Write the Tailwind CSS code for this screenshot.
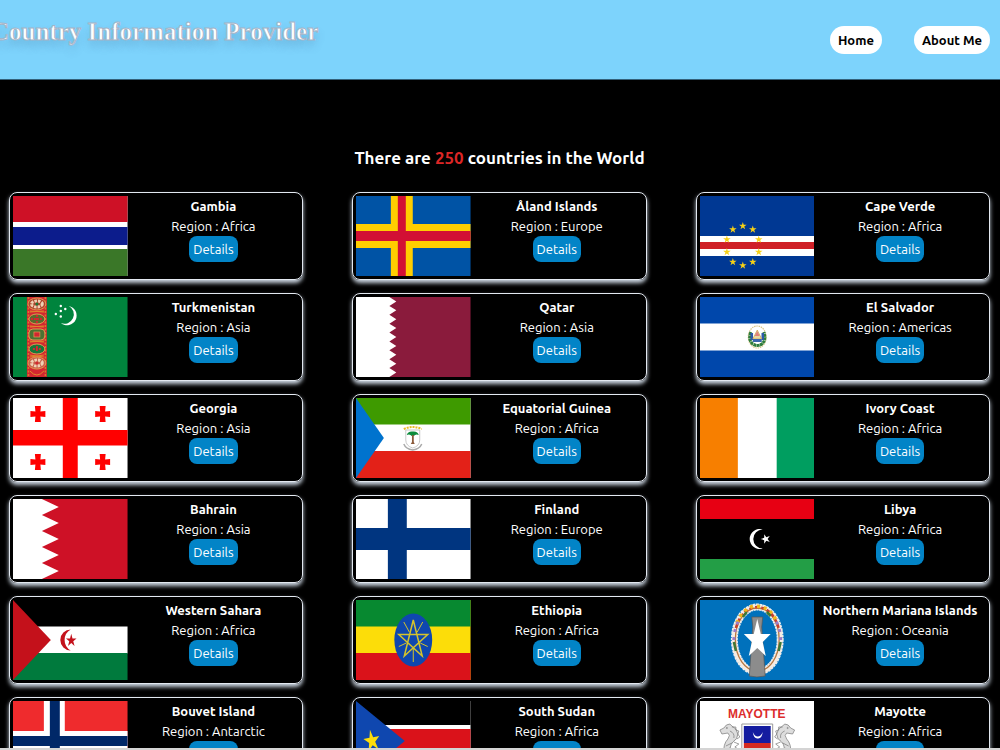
<!DOCTYPE html>
<html lang="en">

<head>
    <meta charset="UTF-8">
    <title>Country Information Provider</title>
    <meta name="viewport" content="width=device-width, initial-scale=1.0">
    <script src="https://cdn.jsdelivr.net/npm/@tailwindcss/browser@4"></script>
</head>

<body class="h-screen overflow-hidden bg-black text-white font-['Ubuntu','Noto_Sans',sans-serif] text-[13px] leading-5">
    <!-- Shared shapes -->
    <svg class="hidden">
        <defs>
            <polygon id="star" points="0,-10 2.2,-3.1 9.5,-3.1 3.6,1.2 5.9,8.1 0,3.8 -5.9,8.1 -3.6,1.2 -9.5,-3.1 -2.2,-3.1" />
            <path id="cross" d="M-3,-8 H3 L2.5,-2.5 L7.5,-3 V3 L2.5,2.5 L3,8 H-3 L-2.5,2.5 L-7.5,3 V-3 L-2.5,-2.5 Z" />
            <g id="seahorse" stroke="#777" stroke-width=".7" fill="#ddd">
                <path d="M-9,3 L-5,1 Q-3,-3 1,-3 L3,-1 Q8,1 9,7 Q9,12 4,15 Q0,19 2,27 L-5,27 Q-6,17 -1,12 Q2,8 -1,6 L-7,7 Z" />
                <path d="M3,0 L7,0 L7,3 L10,4 L9,7 L11,10 L8,12 M1,4 Q6,6 5,11 M-3,19 L3,16 M-4,23 L1,21 M5,15 L10,17 L6,20 L11,23 L5,27" fill="none" />
                <circle cx="-2" cy="1" r=".6" />
            </g>
        </defs>
    </svg>

    <!-- Header -->
    <header class="flex justify-between h-20 bg-[#7dd3fc] border-b border-[#33607a]">
        <h1 class="-ml-[9px] pt-4 font-['Liberation_Serif',serif] font-bold text-[25px] leading-8 text-white whitespace-nowrap [-webkit-text-stroke:1px_#a3b4c8] [text-shadow:0_6px_8px_rgba(60,100,140,0.3)]">Country Information Provider</h1>
        <nav class="flex items-center gap-8 pr-[10px] font-bold text-black">
            <a href="#" class="bg-white rounded-full px-2 py-1">Home</a>
            <a href="#" class="bg-white rounded-full px-2 py-1">About Me</a>
        </nav>
    </header>

    <main class="pl-[9px] pr-[10px] pt-16">
        <h2 class="text-center font-bold text-[17px] leading-7 mb-5">There are <span class="text-[#dc2626]">250</span> countries in the World</h2>

        <!-- Countries -->
        <div class="grid grid-cols-3 gap-x-[49px] gap-y-[13px]">
            <div class="flex p-[3px] border border-slate-200 rounded-lg shadow-[0_3px_4px_#cbd5e1]">
                <svg class="w-2/5 h-20" viewBox="0 0 115 80" preserveAspectRatio="none">
                    <rect width="115" height="80" fill="#fff" />
                    <rect width="115" height="26" fill="#ce1126" />
                    <rect y="31" width="115" height="18" fill="#0c1c8c" />
                    <rect y="53" width="115" height="27" fill="#3a7728" />
                </svg>
                <div class="w-3/5 text-center whitespace-nowrap">
                    <h3 class="font-bold">Gambia</h3>
                    <p>Region : Africa</p>
                    <button class="bg-[#0284c7] rounded-lg px-1 py-[3px] block mx-auto">Details</button>
                </div>
            </div>

            <div class="flex p-[3px] border border-slate-200 rounded-lg shadow-[0_3px_4px_#cbd5e1]">
                <svg class="w-2/5 h-20" viewBox="0 0 115 80" preserveAspectRatio="none">
                    <rect width="115" height="80" fill="#0053a5" />
                    <path d="M35,0H57V28H115V52H57V80H35V52H0V28H35Z" fill="#ffce00" />
                    <path d="M42,0H50V35H115V45H50V80H42V45H0V35H42Z" fill="#d21034" />
                </svg>
                <div class="w-3/5 text-center whitespace-nowrap">
                    <h3 class="font-bold">Åland Islands</h3>
                    <p>Region : Europe</p>
                    <button class="bg-[#0284c7] rounded-lg px-1 py-[3px] block mx-auto">Details</button>
                </div>
            </div>

            <div class="flex p-[3px] border border-slate-200 rounded-lg shadow-[0_3px_4px_#cbd5e1]">
                <svg class="w-2/5 h-20" viewBox="0 0 115 80" preserveAspectRatio="none">
                    <rect width="115" height="80" fill="#003893" />
                    <rect y="40" width="115" height="20" fill="#fff" />
                    <rect y="46" width="115" height="7" fill="#cf2027" />
                    <g fill="#f7d116">
                        <use href="#star" transform="translate(43 30) scale(.4)" />
                        <use href="#star" transform="translate(53 33.5) scale(.4)" />
                        <use href="#star" transform="translate(59 43.5) scale(.4)" />
                        <use href="#star" transform="translate(59 56) scale(.4)" />
                        <use href="#star" transform="translate(53 66) scale(.4)" />
                        <use href="#star" transform="translate(43 69.5) scale(.4)" />
                        <use href="#star" transform="translate(33 66) scale(.4)" />
                        <use href="#star" transform="translate(27 56) scale(.4)" />
                        <use href="#star" transform="translate(27 43.5) scale(.4)" />
                        <use href="#star" transform="translate(33 33.5) scale(.4)" />
                    </g>
                </svg>
                <div class="w-3/5 text-center whitespace-nowrap">
                    <h3 class="font-bold">Cape Verde</h3>
                    <p>Region : Africa</p>
                    <button class="bg-[#0284c7] rounded-lg px-1 py-[3px] block mx-auto">Details</button>
                </div>
            </div>

            <div class="flex p-[3px] border border-slate-200 rounded-lg shadow-[0_3px_4px_#cbd5e1]">
                <svg class="w-2/5 h-20" viewBox="0 0 115 80" preserveAspectRatio="none">
                    <rect width="115" height="80" fill="#00843d" />
                    <rect x="14" width="20" height="80" fill="#d22630" />
                    <path d="M15.5,0V80M32.5,0V80" stroke="#d9782c" stroke-width="1.5" stroke-dasharray="2 1.5" />
                    <g fill="none" stroke="#dd8a2c" stroke-width="1">
                        <path d="M17,14L31,15M17,15L31,14M17,29L31,30M17,30L31,29M17,44L31,45M17,45L31,44M17,58L31,60M17,60L31,58M17,74Q24,82 31,74" />
                    </g>
                    <g stroke="#e39a52" stroke-width="1">
                        <ellipse cx="24" cy="7" rx="9" ry="6" fill="#b0452c" />
                        <ellipse cx="24" cy="22" rx="8" ry="5" fill="#5a6a2c" />
                        <rect x="16" y="32" width="16" height="11" rx="4" fill="#4c7232" />
                        <ellipse cx="24" cy="52" rx="8" ry="5" fill="#18783a" />
                        <ellipse cx="24" cy="66" rx="9" ry="6" fill="#c9604a" />
                    </g>
                    <g fill="none" stroke="#efd0b4" stroke-width="3" stroke-dasharray="2.5 1">
                        <ellipse cx="24" cy="7" rx="5.5" ry="3" />
                        <ellipse cx="24" cy="66" rx="5.5" ry="3" />
                    </g>
                    <path d="M18,22H30M24,18V26M20,52H28M24,49V55" stroke="#d22630" stroke-width="2" stroke-dasharray="2 1" />
                    <rect x="21" y="35" width="6" height="5" fill="#d22630" stroke="#e39a52" stroke-width=".7" />
                    <circle cx="24" cy="7" r="1.5" fill="#18783a" />
                    <circle cx="24" cy="66" r="1.5" fill="#d22630" />
                    <path d="M56,9A9.7,9.7 0 1 1 48,26A9.4,9.4 0 0 0 56,9Z" fill="#fff" />
                    <g fill="#fff">
                        <circle cx="48" cy="9" r="1.2" />
                        <circle cx="52.5" cy="12" r="1.2" />
                        <circle cx="48" cy="14" r="1.2" />
                        <circle cx="43" cy="17" r="1.2" />
                        <circle cx="48" cy="19.5" r="1.2" />
                    </g>
                </svg>
                <div class="w-3/5 text-center whitespace-nowrap">
                    <h3 class="font-bold">Turkmenistan</h3>
                    <p>Region : Asia</p>
                    <button class="bg-[#0284c7] rounded-lg px-1 py-[3px] block mx-auto">Details</button>
                </div>
            </div>

            <div class="flex p-[3px] border border-slate-200 rounded-lg shadow-[0_3px_4px_#cbd5e1]">
                <svg class="w-2/5 h-20" viewBox="0 0 115 80" preserveAspectRatio="none">
                    <rect width="115" height="80" fill="#8a1b3c" />
                    <path d="M0,0H33.5L40.5,4.4L33.5,8.9L40.5,13.3L33.5,17.8L40.5,22.2L33.5,26.7L40.5,31.1L33.5,35.6L40.5,40L33.5,44.4L40.5,48.9L33.5,53.3L40.5,57.8L33.5,62.2L40.5,66.7L33.5,71.1L40.5,75.6L33.5,80H0Z" fill="#fff" />
                </svg>
                <div class="w-3/5 text-center whitespace-nowrap">
                    <h3 class="font-bold">Qatar</h3>
                    <p>Region : Asia</p>
                    <button class="bg-[#0284c7] rounded-lg px-1 py-[3px] block mx-auto">Details</button>
                </div>
            </div>

            <div class="flex p-[3px] border border-slate-200 rounded-lg shadow-[0_3px_4px_#cbd5e1]">
                <svg class="w-2/5 h-20" viewBox="0 0 115 80" preserveAspectRatio="none">
                    <rect width="115" height="80" fill="#0047ab" />
                    <rect y="26.5" width="115" height="27" fill="#fff" />
                    <ellipse cx="57.5" cy="40" rx="9" ry="11" fill="none" stroke="#d9c689" stroke-width="1.2" stroke-dasharray="1.5 .8" />
                    <path d="M51,35Q48,43 53,47Q58,50 62,47Q67,43 64,35" fill="none" stroke="#2f7d3c" stroke-width="3" stroke-dasharray="3 .4" />
                    <path d="M52,36V43M63,36V43" stroke="#2d5aa8" stroke-width="2.5" />
                    <path d="M57.5,33L62,42H53Z" fill="#e8d8a0" stroke="#c9a14a" stroke-width=".7" />
                    <path d="M55,39L57.5,34L60,39Z" fill="#e0807c" />
                    <path d="M53,42H62V45H53Z" fill="#3a66b0" />
                </svg>
                <div class="w-3/5 text-center whitespace-nowrap">
                    <h3 class="font-bold">El Salvador</h3>
                    <p>Region : Americas</p>
                    <button class="bg-[#0284c7] rounded-lg px-1 py-[3px] block mx-auto">Details</button>
                </div>
            </div>

            <div class="flex p-[3px] border border-slate-200 rounded-lg shadow-[0_3px_4px_#cbd5e1]">
                <svg class="w-2/5 h-20" viewBox="0 0 115 80" preserveAspectRatio="none">
                    <rect width="115" height="80" fill="#fff" />
                    <g fill="#f00">
                        <path d="M50,0H65V32H115V47.5H65V80H50V47.5H0V32H50Z" />
                        <use href="#cross" x="25" y="16" />
                        <use href="#cross" x="90" y="16" />
                        <use href="#cross" x="25" y="64" />
                        <use href="#cross" x="90" y="64" />
                    </g>
                </svg>
                <div class="w-3/5 text-center whitespace-nowrap">
                    <h3 class="font-bold">Georgia</h3>
                    <p>Region : Asia</p>
                    <button class="bg-[#0284c7] rounded-lg px-1 py-[3px] block mx-auto">Details</button>
                </div>
            </div>

            <div class="flex p-[3px] border border-slate-200 rounded-lg shadow-[0_3px_4px_#cbd5e1]">
                <svg class="w-2/5 h-20" viewBox="0 0 115 80" preserveAspectRatio="none">
                    <rect width="115" height="80" fill="#fff" />
                    <rect width="115" height="26.5" fill="#3e9a00" />
                    <rect y="53" width="115" height="27" fill="#e32118" />
                    <path d="M0,0L28,40L0,80Z" fill="#0073ce" />
                    <path d="M50,32H64V42Q64,48 57,50Q50,48 50,42Z" fill="#fff" stroke="#bbb" stroke-width=".8" />
                    <path d="M48,31Q57,27 66,31" fill="none" stroke="#e8b923" stroke-width="2" stroke-dasharray="2 1" />
                    <path d="M51,37Q52,33 57,33.5Q62,33 63,37Q60,35.5 58,38H56Q54,35.5 51,37Z" fill="#0c8c3c" />
                    <path d="M56.2,37H58V44L59,46H55L56.2,44Z" fill="#8a5a3a" />
                    <path d="M48,46Q50,51 57,52Q64,51 66,46" fill="none" stroke="#aaa" stroke-width="1.5" />
                </svg>
                <div class="w-3/5 text-center whitespace-nowrap">
                    <h3 class="font-bold">Equatorial Guinea</h3>
                    <p>Region : Africa</p>
                    <button class="bg-[#0284c7] rounded-lg px-1 py-[3px] block mx-auto">Details</button>
                </div>
            </div>

            <div class="flex p-[3px] border border-slate-200 rounded-lg shadow-[0_3px_4px_#cbd5e1]">
                <svg class="w-2/5 h-20" viewBox="0 0 115 80" preserveAspectRatio="none">
                    <rect width="115" height="80" fill="#fff" />
                    <rect width="38" height="80" fill="#f77f00" />
                    <rect x="77" width="38" height="80" fill="#009e60" />
                </svg>
                <div class="w-3/5 text-center whitespace-nowrap">
                    <h3 class="font-bold">Ivory Coast</h3>
                    <p>Region : Africa</p>
                    <button class="bg-[#0284c7] rounded-lg px-1 py-[3px] block mx-auto">Details</button>
                </div>
            </div>

            <div class="flex p-[3px] border border-slate-200 rounded-lg shadow-[0_3px_4px_#cbd5e1]">
                <svg class="w-2/5 h-20" viewBox="0 0 115 80" preserveAspectRatio="none">
                    <rect width="115" height="80" fill="#ce1126" />
                    <path d="M0,0H29L46,8L29,16L46,24L29,32L46,40L29,48L46,56L29,64L46,72L29,80H0Z" fill="#fff" />
                </svg>
                <div class="w-3/5 text-center whitespace-nowrap">
                    <h3 class="font-bold">Bahrain</h3>
                    <p>Region : Asia</p>
                    <button class="bg-[#0284c7] rounded-lg px-1 py-[3px] block mx-auto">Details</button>
                </div>
            </div>

            <div class="flex p-[3px] border border-slate-200 rounded-lg shadow-[0_3px_4px_#cbd5e1]">
                <svg class="w-2/5 h-20" viewBox="0 0 115 80" preserveAspectRatio="none">
                    <rect width="115" height="80" fill="#fff" />
                    <path d="M32,0H51V29H115V51H51V80H32V51H0V29H32Z" fill="#003580" />
                </svg>
                <div class="w-3/5 text-center whitespace-nowrap">
                    <h3 class="font-bold">Finland</h3>
                    <p>Region : Europe</p>
                    <button class="bg-[#0284c7] rounded-lg px-1 py-[3px] block mx-auto">Details</button>
                </div>
            </div>

            <div class="flex p-[3px] border border-slate-200 rounded-lg shadow-[0_3px_4px_#cbd5e1]">
                <svg class="w-2/5 h-20" viewBox="0 0 115 80" preserveAspectRatio="none">
                    <rect width="115" height="80" fill="#000" />
                    <rect width="115" height="20" fill="#e70013" />
                    <rect y="60" width="115" height="20" fill="#239e46" />
                    <path d="M63,30.5A10,10 0 1 0 63,49.5A9.5,9.5 0 0 1 63,30.5Z" fill="#fff" />
                    <use href="#star" transform="translate(66 40) rotate(-18) scale(.5)" fill="#fff" />
                </svg>
                <div class="w-3/5 text-center whitespace-nowrap">
                    <h3 class="font-bold">Libya</h3>
                    <p>Region : Africa</p>
                    <button class="bg-[#0284c7] rounded-lg px-1 py-[3px] block mx-auto">Details</button>
                </div>
            </div>

            <div class="flex p-[3px] border border-slate-200 rounded-lg shadow-[0_3px_4px_#cbd5e1]">
                <svg class="w-2/5 h-20" viewBox="0 0 115 80" preserveAspectRatio="none">
                    <rect width="115" height="80" fill="#000" />
                    <rect y="26.5" width="115" height="27" fill="#fff" />
                    <rect y="53" width="115" height="27" fill="#007a3d" />
                    <path d="M0,0L38,40L0,80Z" fill="#c4111b" />
                    <path d="M58,29.5A10.5,10.5 0 0 0 58,50.5A12,12 0 0 1 58,29.5Z" fill="#c4111b" />
                    <use href="#star" transform="translate(58.5 40.5) scale(.56 .68)" fill="#c4111b" />
                </svg>
                <div class="w-3/5 text-center whitespace-nowrap">
                    <h3 class="font-bold">Western Sahara</h3>
                    <p>Region : Africa</p>
                    <button class="bg-[#0284c7] rounded-lg px-1 py-[3px] block mx-auto">Details</button>
                </div>
            </div>

            <div class="flex p-[3px] border border-slate-200 rounded-lg shadow-[0_3px_4px_#cbd5e1]">
                <svg class="w-2/5 h-20" viewBox="0 0 115 80" preserveAspectRatio="none">
                    <rect width="115" height="80" fill="#fcdd09" />
                    <rect width="115" height="26.5" fill="#078930" />
                    <rect y="53" width="115" height="27" fill="#da121a" />
                    <ellipse cx="57.5" cy="40" rx="19" ry="26.5" fill="#0f47af" />
                    <g fill="none" stroke="#d4c32c" stroke-width="1.5">
                        <path d="M57.5,20L66.5,56L43,34.5H72L48.5,56Z" />
                        <path d="M57.5,49V62M61.5,32L67,22M53.5,32L48,22M64.5,43L72,46.5M50.5,43L43,46.5" stroke-width="1" />
                    </g>
                </svg>
                <div class="w-3/5 text-center whitespace-nowrap">
                    <h3 class="font-bold">Ethiopia</h3>
                    <p>Region : Africa</p>
                    <button class="bg-[#0284c7] rounded-lg px-1 py-[3px] block mx-auto">Details</button>
                </div>
            </div>

            <div class="flex p-[3px] border border-slate-200 rounded-lg shadow-[0_3px_4px_#cbd5e1]">
                <svg class="w-2/5 h-20" viewBox="0 0 115 80" preserveAspectRatio="none">
                    <rect width="115" height="80" fill="#0071bc" />
                    <g fill="none">
                        <ellipse cx="57.5" cy="39.5" rx="23" ry="32.5" stroke="#eee" stroke-width="7" stroke-dasharray="2.5 .6" />
                        <ellipse cx="57.5" cy="39.5" rx="23" ry="32.5" stroke="#f4ece4" stroke-width="5" />
                        <ellipse cx="57.5" cy="39.5" rx="22" ry="31.5" stroke="#b87840" stroke-width="1.3" />
                        <path d="M36,28Q42,8 57.5,7Q73,8 79,28" stroke="#c8402c" stroke-width="2.5" stroke-dasharray="4 2" />
                        <path d="M37,23Q43,9 54,6Q71,6 77,22" stroke="#f0b81c" stroke-width="3.5" stroke-dasharray="3 4" />
                        <path d="M34,40Q34,30 39,20M81,40Q81,30 76,20" stroke="#9a7cc8" stroke-width="3" stroke-dasharray="3 5" />
                        <path d="M36,51L34,42M79,51L81,42M43,17L47,12M71,16L67,12" stroke="#3c7838" stroke-width="2.5" />
                    </g>
                    <path d="M52,17H63L62,27L65.5,76Q57,78 49.5,76L53,27Z" fill="#8c8c8c" stroke="#555" stroke-width=".7" />
                    <path d="M57.5,19L61,34H71L63,42L66,56L57.5,48L49,56L52,42L44,34H54Z" fill="#fff" />
                </svg>
                <div class="w-3/5 text-center whitespace-nowrap">
                    <h3 class="font-bold">Northern Mariana Islands</h3>
                    <p>Region : Oceania</p>
                    <button class="bg-[#0284c7] rounded-lg px-1 py-[3px] block mx-auto">Details</button>
                </div>
            </div>

            <div class="flex p-[3px] border border-slate-200 rounded-lg shadow-[0_3px_4px_#cbd5e1]">
                <svg class="w-2/5 h-20" viewBox="0 0 115 80" preserveAspectRatio="none">
                    <rect width="115" height="80" fill="#ef2b2d" />
                    <path d="M31,0H52V30H115V50H52V80H31V50H0V30H31Z" fill="#fff" />
                    <path d="M37,0H47V35H115V45H47V80H37V45H0V35H37Z" fill="#002868" />
                </svg>
                <div class="w-3/5 text-center whitespace-nowrap">
                    <h3 class="font-bold">Bouvet Island</h3>
                    <p>Region : Antarctic</p>
                    <button class="bg-[#0284c7] rounded-lg px-1 py-[3px] block mx-auto">Details</button>
                </div>
            </div>

            <div class="flex p-[3px] border border-slate-200 rounded-lg shadow-[0_3px_4px_#cbd5e1]">
                <svg class="w-2/5 h-20" viewBox="0 0 115 80" preserveAspectRatio="none">
                    <rect width="115" height="80" fill="#fff" />
                    <rect width="115" height="24" fill="#000" />
                    <rect y="28" width="115" height="24" fill="#da121a" />
                    <rect y="56" width="115" height="24" fill="#078930" />
                    <path d="M0,0L49,40L0,80Z" fill="#0f47af" />
                    <use href="#star" transform="translate(16 40) rotate(-10) scale(.85 1.15)" fill="#fcdd09" />
                </svg>
                <div class="w-3/5 text-center whitespace-nowrap">
                    <h3 class="font-bold">South Sudan</h3>
                    <p>Region : Africa</p>
                    <button class="bg-[#0284c7] rounded-lg px-1 py-[3px] block mx-auto">Details</button>
                </div>
            </div>

            <div class="flex p-[3px] border border-slate-200 rounded-lg shadow-[0_3px_4px_#cbd5e1]">
                <svg class="w-2/5 h-20" viewBox="0 0 115 80" preserveAspectRatio="none">
                    <rect width="115" height="80" fill="#fff" />
                    <text x="57" y="17" text-anchor="middle" fill="#dc2c2c" class="font-['Liberation_Sans',sans-serif] font-bold text-[12px]">MAYOTTE</text>
                    <use href="#seahorse" transform="translate(29 26)" />
                    <use href="#seahorse" transform="translate(86 26) scale(-1 1)" />
                    <path d="M42,23H73V60Q72,68 58,72Q43,68 42,60Z" fill="#fff" stroke="#999" />
                    <rect x="44" y="25" width="27" height="17" fill="#141ca0" />
                    <path d="M44,42H71V60Q70,66 58,69Q45,66 44,60Z" fill="#d42a20" />
                    <path d="M53,31Q54,38 58,37.5Q62,38 63,31Q61,35.5 58,35.5Q55,35.5 53,31Z" fill="#fff" />
                </svg>
                <div class="w-3/5 text-center whitespace-nowrap">
                    <h3 class="font-bold">Mayotte</h3>
                    <p>Region : Africa</p>
                    <button class="bg-[#0284c7] rounded-lg px-1 py-[3px] block mx-auto">Details</button>
                </div>
            </div>
        </div>
    </main>

    <!-- Footer edge -->
    <footer class="fixed bottom-0 inset-x-0 h-0.5 bg-[#d4d4d4]"></footer>
</body>

</html>
